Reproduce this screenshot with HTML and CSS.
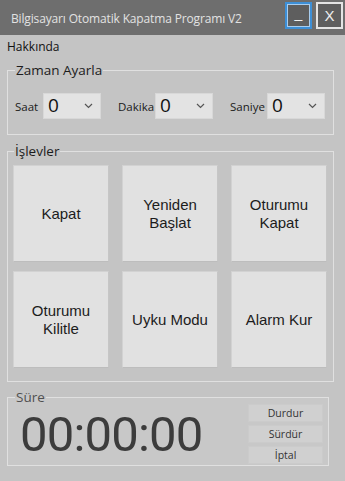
FILE: index.html
```html
<!DOCTYPE html>
<html lang="tr">
<head>
<meta charset="utf-8">
<title>Bilgisayarı Otomatik Kapatma Programı V2</title>
<link rel="stylesheet" href="styles.css">
</head>
<body>
<div class="window">
  <header class="titlebar">
    <span class="title">Bilgisayarı Otomatik Kapatma Programı V2</span>
    <div class="ctrls">
      <div class="cbtn min"><span>_</span></div>
      <div class="cbtn close"><span>X</span></div>
    </div>
  </header>
  <nav class="menu"><span>Hakkında</span></nav>

  <fieldset class="group g-time">
    <legend>Zaman Ayarla</legend>
    <div class="fields">
      <div class="field"><label class="lbl lbl-short">Saat</label><div class="combo"><span>0</span><svg class="chev" width="9" height="6" viewBox="0 0 9 6"><polyline points="1,1 4.5,4.5 8,1" fill="none" stroke="#555" stroke-width="1.2"/></svg></div></div>
      <div class="field"><label class="lbl">Dakika</label><div class="combo"><span>0</span><svg class="chev" width="9" height="6" viewBox="0 0 9 6"><polyline points="1,1 4.5,4.5 8,1" fill="none" stroke="#555" stroke-width="1.2"/></svg></div></div>
      <div class="field"><label class="lbl">Saniye</label><div class="combo"><span>0</span><svg class="chev" width="9" height="6" viewBox="0 0 9 6"><polyline points="1,1 4.5,4.5 8,1" fill="none" stroke="#555" stroke-width="1.2"/></svg></div></div>
    </div>
  </fieldset>

  <fieldset class="group g-func">
    <legend>İşlevler</legend>
    <div class="grid">
      <button class="big">Kapat</button>
      <button class="big">Yeniden<br>Başlat</button>
      <button class="big">Oturumu<br>Kapat</button>
      <button class="big">Oturumu<br>Kilitle</button>
      <button class="big">Uyku Modu</button>
      <button class="big">Alarm Kur</button>
    </div>
  </fieldset>

  <fieldset class="group g-dur">
    <legend>Süre</legend>
    <div class="dur-row">
      <div class="clock">00:00:00</div>
      <div class="small-btns">
        <button class="small">Durdur</button>
        <button class="small">Sürdür</button>
        <button class="small">İptal</button>
      </div>
    </div>
  </fieldset>
</div>
</body>
</html>
```
FILE: styles.css
```css
html, body {
  margin: 0;
  padding: 0;
}
body {
  width: 345px;
  height: 481px;
  overflow: hidden;
  background: #c4c4c4;
  font-family: "Open Sans", "Noto Sans", "DejaVu Sans", sans-serif;
  color: #111;
}
.window {
  width: 345px;
  height: 481px;
  display: flex;
  flex-direction: column;
  background: #c4c4c4;
}
.titlebar {
  height: 35px;
  background: #6e6e6e;
  display: flex;
  align-items: center;
  justify-content: space-between;
  padding: 0 2px 0 11px;
  box-sizing: border-box;
  flex: none;
}
.title {
  color: #e2e2e2;
  font-size: 12px;
  letter-spacing: -0.15px;
  margin-top: 1px;
}
.ctrls {
  display: flex;
  gap: 4px;
  align-items: center;
  margin-top: -4px;
}
.cbtn {
  width: 27px;
  height: 27px;
  box-sizing: border-box;
  background: #5e5e5e;
  color: #eee;
  display: flex;
  align-items: center;
  justify-content: center;
  font-family: "Liberation Sans", sans-serif;
}
.cbtn.min {
  border: 2px solid #3d8fd6;
  box-shadow: inset 0 0 0 1px #a9cdee;
  align-items: flex-end;
  font-size: 14px;
  padding-bottom: 6px;
}
.cbtn.close {
  border: 2px solid #e4e4e4;
  font-size: 15px;
}
.menu {
  height: 23px;
  flex: none;
  display: flex;
  align-items: center;
  padding-left: 7px;
  font-size: 12px;
  color: #111;
}
.group {
  margin: 0 0 0 7px;
  border: 1px solid #e0e0e0;
  box-sizing: border-box;
  min-width: 0;
  flex: none;
}
.group legend {
  padding: 0 1px;
  margin-left: 0;
  font-size: 13.5px;
  line-height: 16px;
  color: #1c1c1c;
}
.g-time {
  margin-top: 4px;
  width: 327px;
  padding: 15px 5px 15px 7px;
}
.fields {
  display: flex;
  gap: 17px;
}
.field {
  display: flex;
  align-items: center;
}
.lbl {
  font-size: 11.5px;
  width: 37px;
  flex: none;
  color: #1a1a1a;
  white-space: nowrap;
}
.lbl-short {
  width: 28px;
}
.combo {
  width: 58px;
  height: 26px;
  box-sizing: border-box;
  background: #e3e3e3;
  border: 1px solid #d8d8d8;
  display: flex;
  align-items: center;
  justify-content: space-between;
  padding: 0 7px 0 4px;
  font-size: 19px;
  color: #111;
}
.combo span {
  line-height: 1;
  margin-top: -1px;
}
.g-func {
  margin-top: 8px;
  width: 327px;
  padding: 6px 5px 13px 5px;
}
.g-func legend {
  margin-left: 1px;
}
.grid {
  display: grid;
  grid-template-columns: 96px 96px 96px;
  grid-auto-rows: 97px;
  column-gap: 13px;
  row-gap: 9px;
}
button {
  font-family: "Liberation Sans", Arial, sans-serif;
  cursor: default;
}
.big {
  background: #e1e1e1;
  border: 1px solid #d2d2d2;
  border-bottom-color: #bdbdbd;
  border-right-color: #c6c6c6;
  margin: 0;
  padding: 0;
  font-size: 15px;
  line-height: 18px;
  color: #1c1c1c;
}
.g-dur {
  margin-top: 8px;
  width: 322px;
  padding: 0 5px 1px 12px;
  background: #c8c8c8;
}
.g-dur legend {
  margin-left: -5px;
  line-height: 14px;
  color: #505050;
}
.dur-row {
  display: flex;
  align-items: center;
  justify-content: space-between;
}
.clock {
  font-family: Roboto, "Open Sans", sans-serif;
  font-size: 49px;
  line-height: 44px;
  color: #3c3c3c;
  letter-spacing: -0.8px;
  margin-top: 2px;
}
.small-btns {
  display: flex;
  flex-direction: column;
  gap: 3px;
}
.small {
  width: 75px;
  height: 18px;
  margin: 0;
  padding: 0;
  background: #d0d0d0;
  border: 1px solid #cbcbcb;
  font-family: "Open Sans", sans-serif;
  font-size: 10.5px;
  color: #333;
  line-height: 16px;
}
```
